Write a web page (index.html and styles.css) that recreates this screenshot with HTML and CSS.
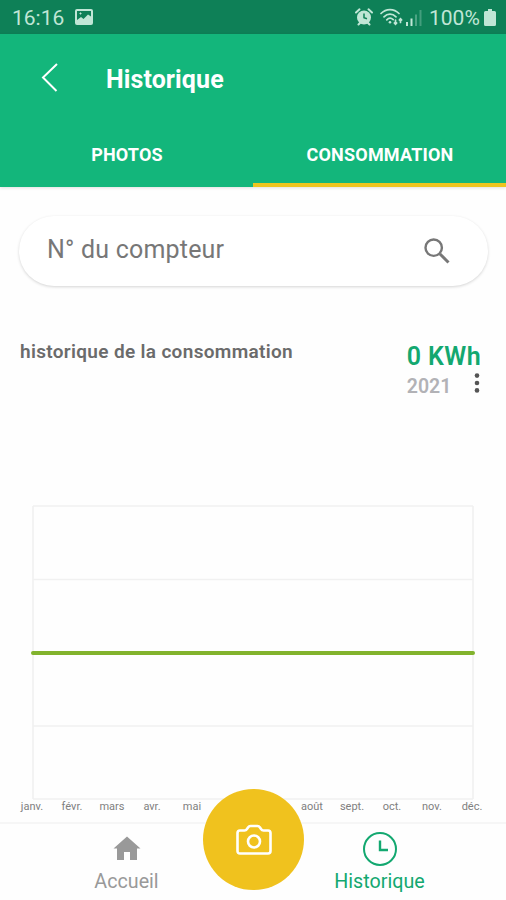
FILE: index.html
```html
<!DOCTYPE html>
<html lang="fr">
<head>
    <meta charset="UTF-8">
    <meta name="viewport" content="width=device-width, initial-scale=1.0">
    <title>Historique</title>
    <link rel="stylesheet" href="styles.css">
</head>
<body>
    <div class="app">
        <!-- Barre d'état -->
        <div class="status-bar">
            <span class="status-time">16:16</span>
            <svg class="status-image" width="18" height="16" viewBox="0 0 18 16">
                <path fill="currentColor" fill-rule="evenodd" d="M2 0h14a2 2 0 0 1 2 2v12a2 2 0 0 1-2 2H2a2 2 0 0 1-2-2V2a2 2 0 0 1 2-2zM2 2v9l4-3 2.500 2L13 5.500l3 2V2zM4 4.500l1-.5.500-1 .500 1 1 .5-1 .5-.5 1-.5-1z"/>
            </svg>
            <span class="status-space"></span>
            <svg class="status-alarm" width="18" height="18" viewBox="0 0 18 18">
                <circle cx="9" cy="9.500" r="7" fill="currentColor"/>
                <path d="M1 4.500L4.500 1.300M17 4.500L13.500 1.300M3.500 16.500l2-2M14.500 16.500l-2-2" stroke="currentColor" stroke-width="2" stroke-linecap="round"/>
                <path d="M9 5.500v4.300l3 1" fill="none" stroke="#0e8057" stroke-width="1.500"/>
            </svg>
            <svg class="status-wifi" width="23" height="18" viewBox="0 0 23 18" fill="none" stroke="currentColor" stroke-width="1.700" stroke-linecap="round">
                <path d="M1 5.500c5-5.300 13-5.300 18 0M4 8.800c3.500-3.600 8.500-3.600 12 0M6.800 11.800c2-2 4.400-2 6.400-.2"/>
                <circle cx="10" cy="14.200" r="1.300" fill="currentColor" stroke="none"/>
                <path d="M15.500 12v4M14.300 15l1.200 1.300 1.200-1.300M20.500 14.500v-4M19.300 12l1.200-1.300 1.200 1.300" stroke-width="1.700"/>
            </svg>
            <svg class="status-signal" width="17" height="16" viewBox="0 0 17 16" fill="currentColor">
                <rect x="0" y="12" width="2" height="4"/>
                <rect x="4.500" y="8.500" width="2" height="7.500"/>
                <rect x="9" y="4.500" width="2" height="11.500" opacity=".35"/>
                <rect x="13.500" y="0" width="2" height="16" opacity=".3"/>
            </svg>
            <span class="status-level">100%</span>
            <svg class="status-battery" width="12" height="17" viewBox="0 0 12 17" fill="currentColor">
                <path d="M4 0h4v2h2.500A1.500 1.500 0 0 1 12 3.500v12a1.500 1.500 0 0 1-1.500 1.500h-9A1.500 1.500 0 0 1 0 15.500v-12A1.500 1.500 0 0 1 1.500 2H4z"/>
            </svg>
        </div>

        <!-- En-tête et onglets -->
        <header class="header">
            <div class="toolbar">
                <svg class="back" width="18" height="30" viewBox="0 0 18 30">
                    <path d="M16 1L2 14.500 15.500 28" fill="none" stroke="currentColor" stroke-width="2"/>
                </svg>
                <h1 class="title">Historique</h1>
            </div>
            <nav class="tabs">
                <a class="tab">PHOTOS</a>
                <a class="tab active">CONSOMMATION</a>
            </nav>
        </header>

        <main class="content">
            <!-- Recherche par compteur -->
            <div class="search">
                <span class="search-text">N° du compteur</span>
                <svg width="26" height="26" viewBox="0 0 26 26" fill="none" stroke="currentColor">
                    <circle cx="9.700" cy="9.700" r="8.200" stroke-width="2.400"/>
                    <path d="M16 16l8.500 8.500" stroke-width="3"/>
                </svg>
            </div>

            <div class="summary">
                <h2 class="summary-title">historique de la consommation</h2>
                <div class="summary-data">
                    <div class="total">0 KWh</div>
                    <div class="year-row">
                        <span class="year">2021</span>
                        <svg width="6" height="20" viewBox="0 0 6 20" fill="#555">
                            <circle cx="3" cy="2.600" r="2.300"/>
                            <circle cx="3" cy="10" r="2.300"/>
                            <circle cx="3" cy="17.400" r="2.300"/>
                        </svg>
                    </div>
                </div>
            </div>

            <!-- Graphique annuel -->
            <svg class="chart" width="446" height="296" viewBox="0 0 446 296" fill="none">
                <path d="M3 2V295M443 2V295" stroke="#f3f3f3" stroke-width="2"/>
                <path d="M3 2H443M3 75.500H443M3 222H443M3 295H443" stroke="#f1f1f1" stroke-width="1.600"/>
                <path d="M3 149H443" stroke="#82b32d" stroke-width="4" stroke-linecap="round"/>
            </svg>
            <div class="months">
                <span>janv.</span>
                <span>févr.</span>
                <span>mars</span>
                <span>avr.</span>
                <span>mai</span>
                <span></span>
                <span></span>
                <span>août</span>
                <span>sept.</span>
                <span>oct.</span>
                <span>nov.</span>
                <span>déc.</span>
            </div>
        </main>

        <!-- Navigation du bas -->
        <footer class="bottom-nav">
            <a class="nav-item">
                <svg width="34" height="34" viewBox="0 0 34 34">
                    <path fill="currentColor" d="M17 4.500L30.500 16.500H27V28H20V20H14V28H7V16.500H3.500z"/>
                </svg>
                <span>Accueil</span>
            </a>
            <a class="nav-item selected">
                <svg width="34" height="34" viewBox="0 0 34 34" fill="none" stroke="currentColor" stroke-width="2">
                    <circle cx="17" cy="17" r="16"/>
                    <path d="M17 8.500V18H25" stroke-width="2.400"/>
                </svg>
                <span>Historique</span>
            </a>
            <button class="camera" type="button" aria-label="Photo">
                <svg width="36" height="32" viewBox="0 0 36 32" fill="none" stroke="currentColor" stroke-width="2.600" stroke-linejoin="round">
                    <path d="M4 6.500H8.500Q10 6.500 11 5L12 3.500Q13 2 14.500 2H21.500Q23 2 24 3.500L25 5Q26 6.500 27.500 6.500H32Q34.500 6.500 34.500 9V27Q34.500 29.500 32 29.500H4Q1.500 29.500 1.500 27V9Q1.500 6.500 4 6.500Z"/>
                    <circle cx="18" cy="17.500" r="6"/>
                </svg>
            </button>
        </footer>
    </div>
</body>
</html>
```
FILE: styles.css
```css
body {
    font-family: Roboto, sans-serif;
    margin: 0;
    padding: 0;
    background: #fefefe;
}
.app {
    display: flex;
    flex-direction: column;
    height: 900px;
    overflow: hidden;
}
.status-bar {
    display: flex;
    align-items: center;
    height: 34px;
    padding: 0 10px 0 12px;
    box-sizing: border-box;
    background: #0e8057;
    color: #c0e6d6;
    font-size: 21px;
}
.status-time {
    width: 63px;
    padding-top: 1px;
}
.status-space {
    flex: 1;
}
.status-wifi {
    margin-left: 7px;
}
.status-signal {
    margin: 2px 6px 0 3px;
}
.status-level {
    width: 51px;
    padding-top: 2px;
    font-size: 21px;
}
.status-battery {
    margin-left: 4px;
}
.header {
    height: 153px;
    background: #13b67b;
    color: white;
    box-shadow: 0 1px 3px rgba(0,0,0,0.12);
}
.toolbar {
    display: flex;
    align-items: center;
    height: 88px;
    padding-left: 41px;
}
.title {
    margin: 3px 0 0 47px;
    font-size: 25px;
    font-weight: 700;
    letter-spacing: 0.1px;
}
.tabs {
    display: flex;
    height: 65px;
}
.tab {
    flex: 1;
    padding: 22px 0 0 1px;
    box-sizing: border-box;
    text-align: center;
    font-size: 18px;
    font-weight: 700;
    line-height: 22px;
    letter-spacing: 0.2px;
}
.tab.active {
    border-bottom: 4px solid #edc51f;
}
.content {
    flex: 1;
}
.search {
    display: flex;
    align-items: center;
    justify-content: space-between;
    height: 70px;
    margin: 29px 18px 0 19px;
    padding: 0 38px 0 28px;
    border-radius: 35px;
    background: white;
    box-shadow: 0 1px 3px rgba(0,0,0,0.17);
    color: #777;
}
.search-text {
    font-size: 25px;
    letter-spacing: 0.2px;
    margin-top: -3px;
}
.summary {
    display: flex;
    justify-content: space-between;
    margin: 53px 25px 0 20px;
}
.summary-title {
    margin: 2px 0 0;
    font-size: 19px;
    font-weight: 600;
    line-height: 22px;
    letter-spacing: 0.33px;
    color: #6b6b6b;
}
.total {
    font-size: 25px;
    font-weight: 600;
    line-height: 35px;
    height: 34px;
    letter-spacing: 0.4px;
    color: #13a870;
}
.year-row {
    display: flex;
    align-items: center;
    justify-content: space-between;
    height: 20px;
    padding-right: 1px;
}
.year {
    font-size: 19.500px;
    font-weight: 600;
    color: #b2b2b6;
    margin-top: 6px;
}
.chart {
    display: block;
    margin: 111px 0 0 30px;
}
.months {
    display: grid;
    grid-template-columns: repeat(12, 40px);
    margin-left: 12px;
    font-size: 11px;
    line-height: 13px;
    text-align: center;
    color: #808080;
}
.bottom-nav {
    position: relative;
    display: flex;
    height: 78px;
    box-sizing: border-box;
    border-top: 2px solid #f6f6f6;
    background: #fefefe;
}
.nav-item {
    flex: 1;
    display: flex;
    flex-direction: column;
    align-items: center;
    padding-top: 8px;
    font-size: 19.700px;
    line-height: 32px;
    color: #999;
}
.nav-item.selected {
    color: #13a870;
}
/* Bouton flottant au-dessus de la barre */
.camera {
    position: absolute;
    top: -35px;
    left: 203px;
    display: flex;
    align-items: center;
    justify-content: center;
    width: 101px;
    height: 101px;
    padding: 0;
    border: none;
    border-radius: 50%;
    background: #f0c21e;
    color: white;
}
```
